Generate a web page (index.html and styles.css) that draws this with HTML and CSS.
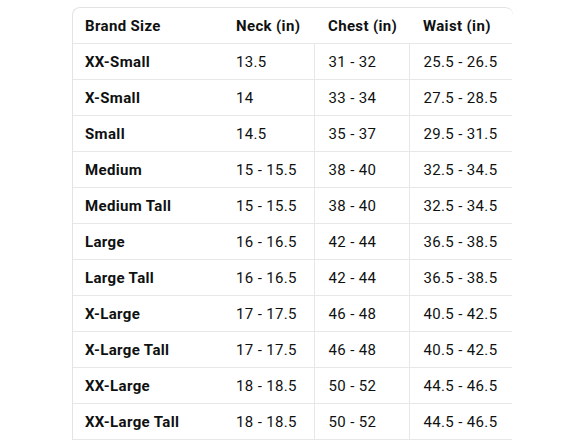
FILE: index.html
```html
<!DOCTYPE html>
<html>
<head>
<meta charset="utf-8">
<link rel="stylesheet" href="styles.css">
</head>
<body>
<div class="wrap">
<table class="chart">
<colgroup><col class="c1"><col class="c2"><col class="c3"><col class="c4"></colgroup>
<thead>
<tr><th>Brand Size</th><th>Neck (in)</th><th class="hsep">Chest (in)</th><th class="hsep">Waist (in)</th></tr>
</thead>
<tbody>
<tr><th>XX-Small</th><td>13.5</td><td class="sep">31 - 32</td><td class="sep">25.5 - 26.5</td></tr>
<tr><th>X-Small</th><td>14</td><td class="sep">33 - 34</td><td class="sep">27.5 - 28.5</td></tr>
<tr><th>Small</th><td>14.5</td><td class="sep">35 - 37</td><td class="sep">29.5 - 31.5</td></tr>
<tr><th>Medium</th><td>15 - 15.5</td><td class="sep">38 - 40</td><td class="sep">32.5 - 34.5</td></tr>
<tr><th>Medium Tall</th><td>15 - 15.5</td><td class="sep">38 - 40</td><td class="sep">32.5 - 34.5</td></tr>
<tr><th>Large</th><td>16 - 16.5</td><td class="sep">42 - 44</td><td class="sep">36.5 - 38.5</td></tr>
<tr><th>Large Tall</th><td>16 - 16.5</td><td class="sep">42 - 44</td><td class="sep">36.5 - 38.5</td></tr>
<tr><th>X-Large</th><td>17 - 17.5</td><td class="sep">46 - 48</td><td class="sep">40.5 - 42.5</td></tr>
<tr><th>X-Large Tall</th><td>17 - 17.5</td><td class="sep">46 - 48</td><td class="sep">40.5 - 42.5</td></tr>
<tr><th>XX-Large</th><td>18 - 18.5</td><td class="sep">50 - 52</td><td class="sep">44.5 - 46.5</td></tr>
<tr><th>XX-Large Tall</th><td>18 - 18.5</td><td class="sep">50 - 52</td><td class="sep">44.5 - 46.5</td></tr>
</tbody>
</table>
</div>
</body>
</html>
```
FILE: styles.css
```css
html, body {
  margin: 0;
  padding: 0;
  background: #ffffff;
}
body {
  font-family: Roboto, "Noto Sans", "Liberation Sans", sans-serif;
  color: #0f1111;
}
.wrap {
  margin: 7px 0 0 72px;
  width: 440px;
  border-top: 1px solid #e3e3e3;
  border-left: 1px solid #e3e3e3;
  border-top-left-radius: 8px;
  border-top-right-radius: 8px;
  overflow: hidden;
}
.chart {
  border-collapse: collapse;
  table-layout: fixed;
  width: 439px;
  font-size: 15px;
  letter-spacing: 0.35px;
}
.c1 { width: 151px; }
.c2 { width: 90px; }
.c3 { width: 95px; }
.c4 { width: 103px; }
.chart th, .chart td {
  height: 35px;
  padding: 0 0 0 12px;
  text-align: left;
  vertical-align: middle;
  border-bottom: 1px solid #e7e7e7;
  white-space: nowrap;
}
.chart th { font-weight: 700; }
.chart td { font-weight: 400; }
.chart th.hsep { padding-left: 14px; }
.chart td.sep { border-left: 1px solid #e7e7e7; padding-left: 14px; }
```
